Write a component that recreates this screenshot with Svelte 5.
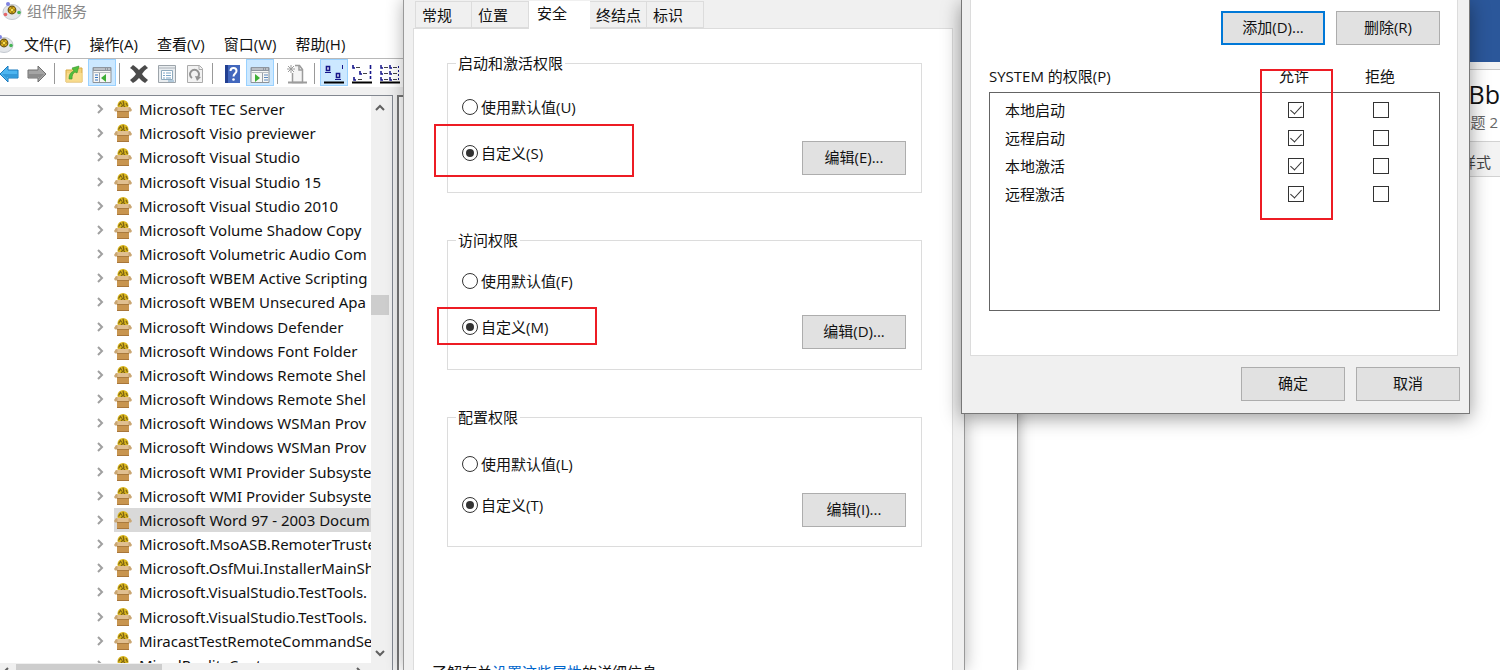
<script lang="ts">
  type Group = {
    id: string;
    title: string;
    defaultKey: string;
    customKey: string;
    editKey: string;
  };

  const menus = ['文件(F)', '操作(A)', '查看(V)', '窗口(W)', '帮助(H)'];

  const components = [
    'Microsoft TEC Server',
    'Microsoft Visio previewer',
    'Microsoft Visual Studio',
    'Microsoft Visual Studio 15',
    'Microsoft Visual Studio 2010',
    'Microsoft Volume Shadow Copy',
    'Microsoft Volumetric Audio Com',
    'Microsoft WBEM Active Scripting',
    'Microsoft WBEM Unsecured Apa',
    'Microsoft Windows Defender',
    'Microsoft Windows Font Folder',
    'Microsoft Windows Remote Shel',
    'Microsoft Windows Remote Shel',
    'Microsoft Windows WSMan Prov',
    'Microsoft Windows WSMan Prov',
    'Microsoft WMI Provider Subsyste',
    'Microsoft WMI Provider Subsyste',
    'Microsoft Word 97 - 2003 Docum',
    'Microsoft.MsoASB.RemoterTruste',
    'Microsoft.OsfMui.InstallerMainSh',
    'Microsoft.VisualStudio.TestTools.',
    'Microsoft.VisualStudio.TestTools.',
    'MiracastTestRemoteCommandSe',
    'MixedRealityCapture'
  ];

  const tabs = ['常规', '位置', '安全', '终结点', '标识'];

  const groups: Group[] = [
    { id: 'launch', title: '启动和激活权限', defaultKey: 'U', customKey: 'S', editKey: 'E' },
    { id: 'access', title: '访问权限', defaultKey: 'F', customKey: 'M', editKey: 'D' },
    { id: 'config', title: '配置权限', defaultKey: 'L', customKey: 'T', editKey: 'I' }
  ];

  let selected = $state(17);
  let activeTab = $state(2);
  let choice: Record<string, string> = $state({ launch: 'custom', access: 'custom', config: 'custom' });
  let permissions = $state([
    { name: '本地启动', allow: true, deny: false },
    { name: '远程启动', allow: true, deny: false },
    { name: '本地激活', allow: true, deny: false },
    { name: '远程激活', allow: true, deny: false }
  ]);
</script>

{#snippet appIcon()}
  <svg class="app-icon" width="20" height="20" viewBox="0 0 20 20" aria-hidden="true">
    <ellipse cx="10" cy="11" rx="9" ry="7.500" fill="#e3e6ea" stroke="#c3c8cf" />
    <circle cx="10" cy="9" r="3.800" fill="#dcae18" stroke="#6b5412" stroke-width="1.200" />
    <path d="M10 6v6M7 9h6" stroke="#6b5412" />
    <circle cx="10" cy="9" r="1.300" fill="#f8df55" />
    <circle cx="6" cy="3" r="2" fill="#7e82e0" />
    <circle cx="3.500" cy="13.500" r="1.800" fill="#e66568" />
    <circle cx="17" cy="11.500" r="1.800" fill="#45b455" />
  </svg>
{/snippet}

{#snippet boxIcon()}
  <svg width="18" height="20" viewBox="0 0 18 20" aria-hidden="true">
    <circle cx="9" cy="6.500" r="5.500" fill="#d9b51c" />
    <path d="M4.500 6.500l2-3 1.500 2M9 2l1 4M12 4l1.500 3M7 8l2-2 2 2" fill="none" stroke="#7d6414" stroke-width="1.200" />
    <path d="M3 9h12v10H3z" fill="#c8954f" />
    <path d="M2 8h14l1 4H1z" fill="#e0bf90" />
    <path d="M2 8L0 11l1 1.500h2.500V9zM16 8l2 3-1 1.500h-2.500V9z" fill="#caa672" />
    <path d="M3 12.500h12" stroke="#a97a3d" />
    <path d="M3 18.500h12" stroke="#a8763a" />
  </svg>
{/snippet}

{#snippet chevron(dir: string)}
  <svg class="chevron {dir}" width="10" height="10" viewBox="0 0 10 10" aria-hidden="true">
    <path d="M1 7l4-4 4 4" fill="none" stroke="currentColor" stroke-width="2" />
  </svg>
{/snippet}

{#snippet arrow(light: string, dark: string, flip: boolean)}
  <svg width="20" height="20" viewBox="0 0 20 20" aria-hidden="true">
    <path
      d={flip ? 'M19 10L11 2v4H1v8h10v4z' : 'M1 10l8-8v4h10v8H9v4z'}
      fill={light}
      stroke={dark}
      stroke-linejoin="round"
    />
    <path d={flip ? 'M2 10h15l-5 5v-2H2z' : 'M3 10h15v3H8v2z'} fill={dark} opacity=".45" />
  </svg>
{/snippet}

{#snippet paneIcon(right: boolean)}
  <svg width="20" height="20" viewBox="0 0 20 20" aria-hidden="true">
    <path d="M1 3.500h18v15H1z" fill="#f7f7f5" stroke="#8d9298" />
    <path d="M1 3h18v4H1z" fill="#8e959e" />
    <path d="M2 5h11M14 5h1M16 5h2" stroke="#e6e9ed" />
    <path d="M1 8.500h18" stroke="#b7bcc2" />
    {#if right}
      <path d="M12.500 9v9" stroke="#9aa0a8" />
      <path d="M14 11h4M14 13.500h4M14 16h4" stroke="#5a87bd" />
      <path d="M5 10l5 4-5 4z" fill="#3dae35" />
    {:else}
      <path d="M7.500 9v9" stroke="#9aa0a8" />
      <path d="M3 11h3M3 13.500h3M3 16h3" stroke="#3472c0" />
      <path d="M14 10l-5 4 5 4z" fill="#3dae35" />
    {/if}
  </svg>
{/snippet}

<main class="desktop">
  <section class="window word" aria-label="Word">
    <div class="word-title"></div>
    <div class="word-edge"></div>
    <div class="word-styles">
      <span class="preview">AaBb</span>
      <span class="style-name">标题 2</span>
    </div>
    <div class="word-caption">样式</div>
  </section>

  <section class="window console" aria-label="组件服务">
    <header class="titlebar">{@render appIcon()}组件服务</header>
    <nav class="menubar">
      {@render appIcon()}
      {#each menus as menu}
        <button>{menu}</button>
      {/each}
    </nav>

    <div class="toolbar">
      <button aria-label="后退">{@render arrow('#4db5f0', '#1979bd', false)}</button>
      <button aria-label="前进">{@render arrow('#a5a5a5', '#707070', true)}</button>
      <i></i>
      <button aria-label="向上">
        <svg width="20" height="20" viewBox="0 0 20 20">
          <path d="M2 6h6l2-2h8v14H2z" fill="#f3d27a" stroke="#d7a943" />
          <path d="M2 17l1-8h16l-1 9H2z" fill="#f9df95" opacity=".75" />
          <path d="M5 15c0-5 2-7 5-8L8 4l7-2-2 7-2-1c-2 1-3 3-3 7z" fill="#51bf3e" stroke="#38942b" stroke-width=".6" />
        </svg>
      </button>
      <button class="on" aria-label="显示控制台树">{@render paneIcon(false)}</button>
      <i></i>
      <button aria-label="删除">
        <svg width="20" height="20" viewBox="0 0 20 20">
          <path d="M1 4l3-3c2 1 4 3 6 5 2-2 4-4 6-5l3 3c-2 1-4 3-6 6 2 3 4 4 6 6l-3 3c-2-1-4-3-6-5-2 2-4 4-6 5l-3-3c2-2 4-3 6-6-2-3-4-5-6-6z" fill="#4b4b4b" />
        </svg>
      </button>
      <button aria-label="属性">
        <svg width="20" height="20" viewBox="0 0 20 20">
          <path d="M1.500 1.500h17v17h-17z" fill="#e9edf0" stroke="#9da4aa" />
          <path d="M2 4h16" stroke="#aab0b7" />
          <path d="M4.500 6.500h11v9h-11z" fill="#fff" stroke="#8faabd" />
          <path d="M6 9h2M9 9h5M6 11.500h2M9 11.500h5M6 14h2M9 14h5M11 17h6" stroke="#7ba6c8" />
        </svg>
      </button>
      <button aria-label="刷新">
        <svg width="20" height="20" viewBox="0 0 20 20">
          <path d="M2.500 1.500h12l3 3v14h-15z" fill="#f2f2f2" stroke="#aaa" />
          <path d="M14 1.500v4h4" fill="none" stroke="#aaa" />
          <path d="M7 14a4.500 4.500 0 1 1 5 0" fill="none" stroke="#929292" stroke-width="2" />
          <path d="M10 12l6 1-4 4z" fill="#929292" />
        </svg>
      </button>
      <i></i>
      <button aria-label="帮助">
        <svg width="20" height="20" viewBox="0 0 20 20">
          <path d="M3 1h15v18H3z" fill="#4267bd" />
          <path d="M3 1h3v18H3z" fill="#223f91" />
          <path d="M8.500 7c0-4 6-4 6 0 0 2.500-3 2.500-3 5.500" fill="none" stroke="#fff" stroke-width="2" />
          <circle cx="11.500" cy="15.500" r="1.300" fill="#fff" />
        </svg>
      </button>
      <button class="on" aria-label="操作窗格">{@render paneIcon(true)}</button>
      <i></i>
      <button aria-label="新建">
        <svg width="20" height="20" viewBox="0 0 20 20">
          <path d="M5.500 9v9.500h10V5.500l-3-4H8" fill="#f5f5f5" stroke="#9c9c9c" stroke-width="1.500" />
          <path d="M12 2v4h4" fill="none" stroke="#9c9c9c" stroke-width="1.500" />
          <path d="M4 1v8M0 5h8M1 2l6 6M7 2L1 8" stroke="#9c9c9c" />
          <path d="M1 18.500h19" stroke="#9c9c9c" stroke-width="2" />
        </svg>
      </button>
      <i></i>
      <button class="on" aria-label="图标">
        <svg width="20" height="20" viewBox="0 0 20 20">
          <path d="M2.500 2.500h3v4h-3zM12.500 9.500h3v4h-3z" fill="#fff" stroke="#16168b" stroke-width="1.600" />
          <path d="M1 8.500h6M11 15.500h6" stroke="#16168b" />
          <path d="M18.500 1v4" stroke="#16168b" />
          <path d="M0 18.500h20" stroke="#000" stroke-width="2" />
        </svg>
      </button>
      <button aria-label="小图标">
        <svg width="20" height="20" viewBox="0 0 20 20">
          <path d="M1 1v3h2M8 7v3h2M2 13v3h2M18.500 1v4M18.500 7v3M18.500 12v3" fill="none" stroke="#16168b" stroke-width="1.600" />
          <path d="M4 3.500h4M11 9.500h4M6 15.500h4" stroke="#444" />
          <path d="M0 18.500h20" stroke="#000" stroke-width="2" />
        </svg>
      </button>
      <button aria-label="列表">
        <svg width="20" height="20" viewBox="0 0 20 20">
          <path d="M1 1v3h2M1 7v3h2M1 13v3h2M10 1v3h2M10 7v3h2M10 13v3h2" fill="none" stroke="#16168b" stroke-width="1.500" />
          <path d="M4 3.500h4M4 9.500h4M4 15.500h4M13 3.500h4M13 9.500h4M13 15.500h4" stroke="#444" />
          <path d="M18.500 2v14" stroke="#16168b" stroke-dasharray="2 2" />
          <path d="M0 18.500h20" stroke="#000" stroke-width="2" />
        </svg>
      </button>
    </div>

    <div class="panes">
      <div class="tree-pane">
        <div class="tree-row">
          <ul class="tree">
            {#each components as name, i}
              <li>
                {@render chevron('right')}
                <button class="node" class:selected={i === selected} onclick={() => (selected = i)}>
                  {@render boxIcon()}<span>{name}</span>
                </button>
              </li>
            {/each}
          </ul>
          <div class="vscroll">
            {@render chevron('up')}
            <div class="thumb"></div>
            {@render chevron('down')}
          </div>
        </div>
        <div class="hscroll">
          {@render chevron('left')}
          <div class="thumb"></div>
          {@render chevron('right')}
        </div>
      </div>
      <div class="result-pane"></div>
    </div>
  </section>

  <section class="window properties" aria-label="属性">
    <div class="tabs" role="tablist">
      {#each tabs as tab, i}
        <button role="tab" aria-selected={i === activeTab} onclick={() => (activeTab = i)}>{tab}</button>
      {/each}
    </div>
    <div class="page">
      {#each groups as group}
        <fieldset class={group.id}>
          <legend>{group.title}</legend>
          <div class="options">
            <label>
              <input type="radio" name={group.id} value="default" bind:group={choice[group.id]} />
              使用默认值({group.defaultKey})
            </label>
            <label>
              <input type="radio" name={group.id} value="custom" bind:group={choice[group.id]} />
              自定义({group.customKey})
            </label>
          </div>
          <button class="push">编辑({group.editKey})...</button>
        </fieldset>
      {/each}
      <p>了解有关<a href="#properties">设置这些属性</a>的详细信息。</p>
    </div>
  </section>

  <section class="window permissions" aria-label="权限">
    <div class="page">
      <div class="actions">
        <button class="push focused">添加(D)...</button>
        <button class="push">删除(R)</button>
      </div>
      <div class="heading">
        <span class="name">SYSTEM 的权限(P)</span>
        <span>允许</span>
        <span>拒绝</span>
      </div>
      <div class="listbox">
        <table>
          <tbody>
            {#each permissions as perm}
              <tr>
                <th scope="row">{perm.name}</th>
                <td><input type="checkbox" aria-label="{perm.name} 允许" bind:checked={perm.allow} /></td>
                <td><input type="checkbox" aria-label="{perm.name} 拒绝" bind:checked={perm.deny} /></td>
              </tr>
            {/each}
          </tbody>
        </table>
      </div>
    </div>
    <footer>
      <button class="push">确定</button>
      <button class="push">取消</button>
    </footer>
  </section>

  <div class="mark mark-launch"></div>
  <div class="mark mark-access"></div>
  <div class="mark mark-allow"></div>
</main>

<style>
  :global(body) { margin: 0; }
  .desktop {
    position: relative;
    height: 100vh;
    overflow: hidden;
    background: #fff;
    color: #111;
    font: 15px/20px "Open Sans", "Noto Sans CJK SC", sans-serif;
  }
  .desktop * { box-sizing: border-box; }
  button, input { font: inherit; color: inherit; margin: 0; }
  button { border: 0; padding: 0; background: none; white-space: nowrap; }
  .window { position: absolute; top: 0; display: flex; flex-direction: column; }

  .word { left: 1018px; right: 0; bottom: 0; background: #fff; overflow: hidden; }
  .word-title { height: 62px; background: #2b579a; }
  .word-edge { height: 8px; background: #f3f3f3; border-bottom: 1px solid #c8c8c8; }
  .word-styles {
    height: 72px;
    display: flex;
    flex-direction: column;
    align-items: flex-end;
    padding-top: 8px;
    border-bottom: 1px solid #d2d2d2;
  }
  .preview { font-size: 25px; line-height: 32px; }
  .style-name { margin: 2px 2px 0 0; color: #666; }
  .word-caption {
    height: 35px;
    padding: 10px 9px 0 0;
    text-align: right;
    color: #444;
    background: #f3f3f3;
    border-bottom: 1px solid #d2d2d2;
  }

  .console {
    left: 0;
    width: 1018px;
    bottom: 0;
    background: #fff;
    border-right: 1px solid #999;
    box-shadow: 0 0 14px rgba(0, 0, 0, 0.35);
    overflow: hidden;
  }
  .titlebar { display: flex; align-items: center; gap: 5px; height: 22px; padding-left: 2px; color: #888; }
  .menubar {
    display: flex;
    align-items: center;
    gap: 19px;
    height: 37px;
    padding-top: 8px;
    border-bottom: 1px solid #b8b8b8;
  }
  .menubar .app-icon { flex: none; margin: 0 -9px 0 -6px; }
  .toolbar { display: flex; flex: none; height: 28px; margin-left: -5px; }
  .toolbar button { display: grid; place-items: center; flex: none; width: 28px; height: 27px; padding-top: 2px; }
  .toolbar .on { background: #cce8ff; border: 1px solid #99d1ff; }
  .toolbar i { flex: none; width: 1px; height: 21px; margin: 4px 5px 0 3px; background: #999; }
  .panes { flex: 1; display: flex; gap: 4px; min-height: 0; padding-top: 8px; background: #f0f0f0; }
  .tree-pane {
    display: flex;
    flex-direction: column;
    flex: none;
    width: 393px;
    border-top: 1px solid #828790;
    border-right: 1px solid #828790;
    background: #f0f0f0;
  }
  .tree-row { flex: 1; display: flex; min-height: 0; overflow: hidden; }
  .tree {
    display: flex;
    flex-direction: column;
    justify-content: space-between;
    flex: 1;
    min-width: 0;
    margin: 0 0 -14px;
    padding: 1px 0 0 95px;
    overflow: hidden;
    list-style: none;
    background: #fff;
    font-family: "Noto Sans", "Noto Sans CJK SC", sans-serif;
  }
  .tree li { display: flex; align-items: center; flex: none; gap: 9px; height: 24px; }
  .chevron { flex: none; color: #606060; }
  .tree .chevron { color: #a0a0a0; }
  .chevron.right { transform: rotate(90deg); }
  .chevron.down { transform: rotate(180deg); }
  .chevron.left { transform: rotate(-90deg); }
  .node { display: flex; align-items: center; flex: 1; min-width: 0; gap: 7px; height: 24px; overflow: hidden; color: #111; }
  .node svg { flex: none; }
  .node.selected { background: #d9d9d9; }
  .vscroll { display: flex; flex-direction: column; align-items: center; flex: none; width: 21px; padding: 7px 3px 5px 0; }
  .vscroll .thumb { width: 18px; height: 20px; margin: 182px 0 auto; background: #cdcdcd; }
  .hscroll { display: flex; flex: none; height: 7px; padding: 1px 28px 0 1px; overflow: hidden; }
  .hscroll .chevron { margin-top: 3px; }
  .hscroll .thumb { width: 146px; height: 8px; margin: 0 auto 0 5px; background: #cdcdcd; }
  .result-pane { flex: 1; background: #fff; border-top: 2px solid #777; border-left: 2px solid #777; }

  .properties {
    left: 403px;
    width: 562px;
    bottom: 0;
    padding: 1px 11px 0 9px;
    background: #f0f0f0;
    border: solid #999;
    border-width: 0 1px;
    box-shadow: 0 0 16px rgba(0, 0, 0, 0.3);
    overflow: hidden;
  }
  .tabs { display: flex; flex: none; height: 28px; padding-left: 2px; }
  .tabs button {
    width: 57px;
    height: 27px;
    padding: 0 6px;
    text-align: left;
    background: #f0f0f0;
    border: 1px solid #dcdcdc;
    border-left-width: 0;
  }
  .tabs button:first-child { border-left-width: 1px; }
  .tabs button[aria-selected='true'] { width: 61px; height: 28px; padding: 0 8px 4px; border-color: #fff; background: #fff; position: relative; }
  .page { background: #fff; border: 1px solid #dcdcdc; }
  .properties .page { display: flex; flex-direction: column; flex: 1; gap: 37px; margin-top: -1px; padding: 24px 30px 0 33px; }
  fieldset {
    display: flex;
    justify-content: space-between;
    flex: none;
    min-width: 0;
    min-height: 140px;
    margin: 0;
    padding: 24px 15px 17px 14px;
    border: 1px solid #dcdcdc;
  }
  legend { margin-left: -6px; padding: 0 2px; }
  fieldset .push { align-self: flex-end; }
  .options { display: flex; flex-direction: column; gap: 26px; padding-bottom: 12px; }
  .access { padding-top: 21px; padding-bottom: 20px; }
  .config { padding-top: 27px; }
  .config .options { gap: 21px; }
  .options label { display: flex; align-items: center; gap: 3px; height: 20px; }
  input[type='radio'] {
    appearance: none;
    display: grid;
    place-items: center;
    width: 16px;
    height: 16px;
    border: 1px solid #333;
    border-radius: 50%;
    background: #fff;
  }
  input[type='radio']:checked::before { content: ''; width: 8px; height: 8px; border-radius: 50%; background: #333; }
  .properties p { margin: 78px 0 0 -15px; white-space: nowrap; }
  .properties a { color: #0066cc; text-decoration: none; }

  .push { width: 104px; height: 34px; padding-bottom: 2px; border: 1px solid #adadad; background: #e1e1e1; }
  .push.focused { border: 2px solid #0078d7; }

  .permissions {
    left: 961px;
    width: 509px;
    padding: 0 11px 12px 8px;
    background: #f0f0f0;
    border: 1px solid #777;
    border-top: 0;
    box-shadow: 0 4px 18px rgba(0, 0, 0, 0.4);
  }
  .permissions .page { padding: 11px 17px 44px 18px; border-top: 0; }
  .actions { display: flex; justify-content: flex-end; gap: 11px; }
  .heading { display: flex; margin-top: 21px; padding-right: 17px; }
  .heading span { width: 86px; text-align: center; }
  .heading .name { flex: 1; text-align: left; }
  .listbox { height: 219px; margin-top: 6px; padding: 3px 16px 0 15px; border: 1px solid #646464; }
  table { width: 100%; border-collapse: collapse; }
  tr { height: 28px; }
  th, td { padding: 0; text-align: left; font-weight: normal; }
  td { width: 85px; }
  input[type='checkbox'] {
    appearance: none;
    display: grid;
    justify-content: center;
    width: 16px;
    height: 16px;
    margin: 0 auto;
    border: 1px solid #333;
    background: #fff;
  }
  input[type='checkbox']:checked::before {
    content: '';
    width: 5px;
    height: 10px;
    border: solid #333;
    border-width: 0 1px 1px 0;
    transform: rotate(42deg);
  }
  footer { display: flex; justify-content: flex-end; gap: 11px; padding-top: 11px; margin-right: -2px; }

  .mark { position: absolute; border: 2px solid #ed1c24; pointer-events: none; }
  .mark-launch { left: 434px; top: 124px; width: 200px; height: 53px; }
  .mark-access { left: 437px; top: 307px; width: 160px; height: 38px; }
  .mark-allow { left: 1260px; top: 69px; width: 73px; height: 151px; }
</style>
